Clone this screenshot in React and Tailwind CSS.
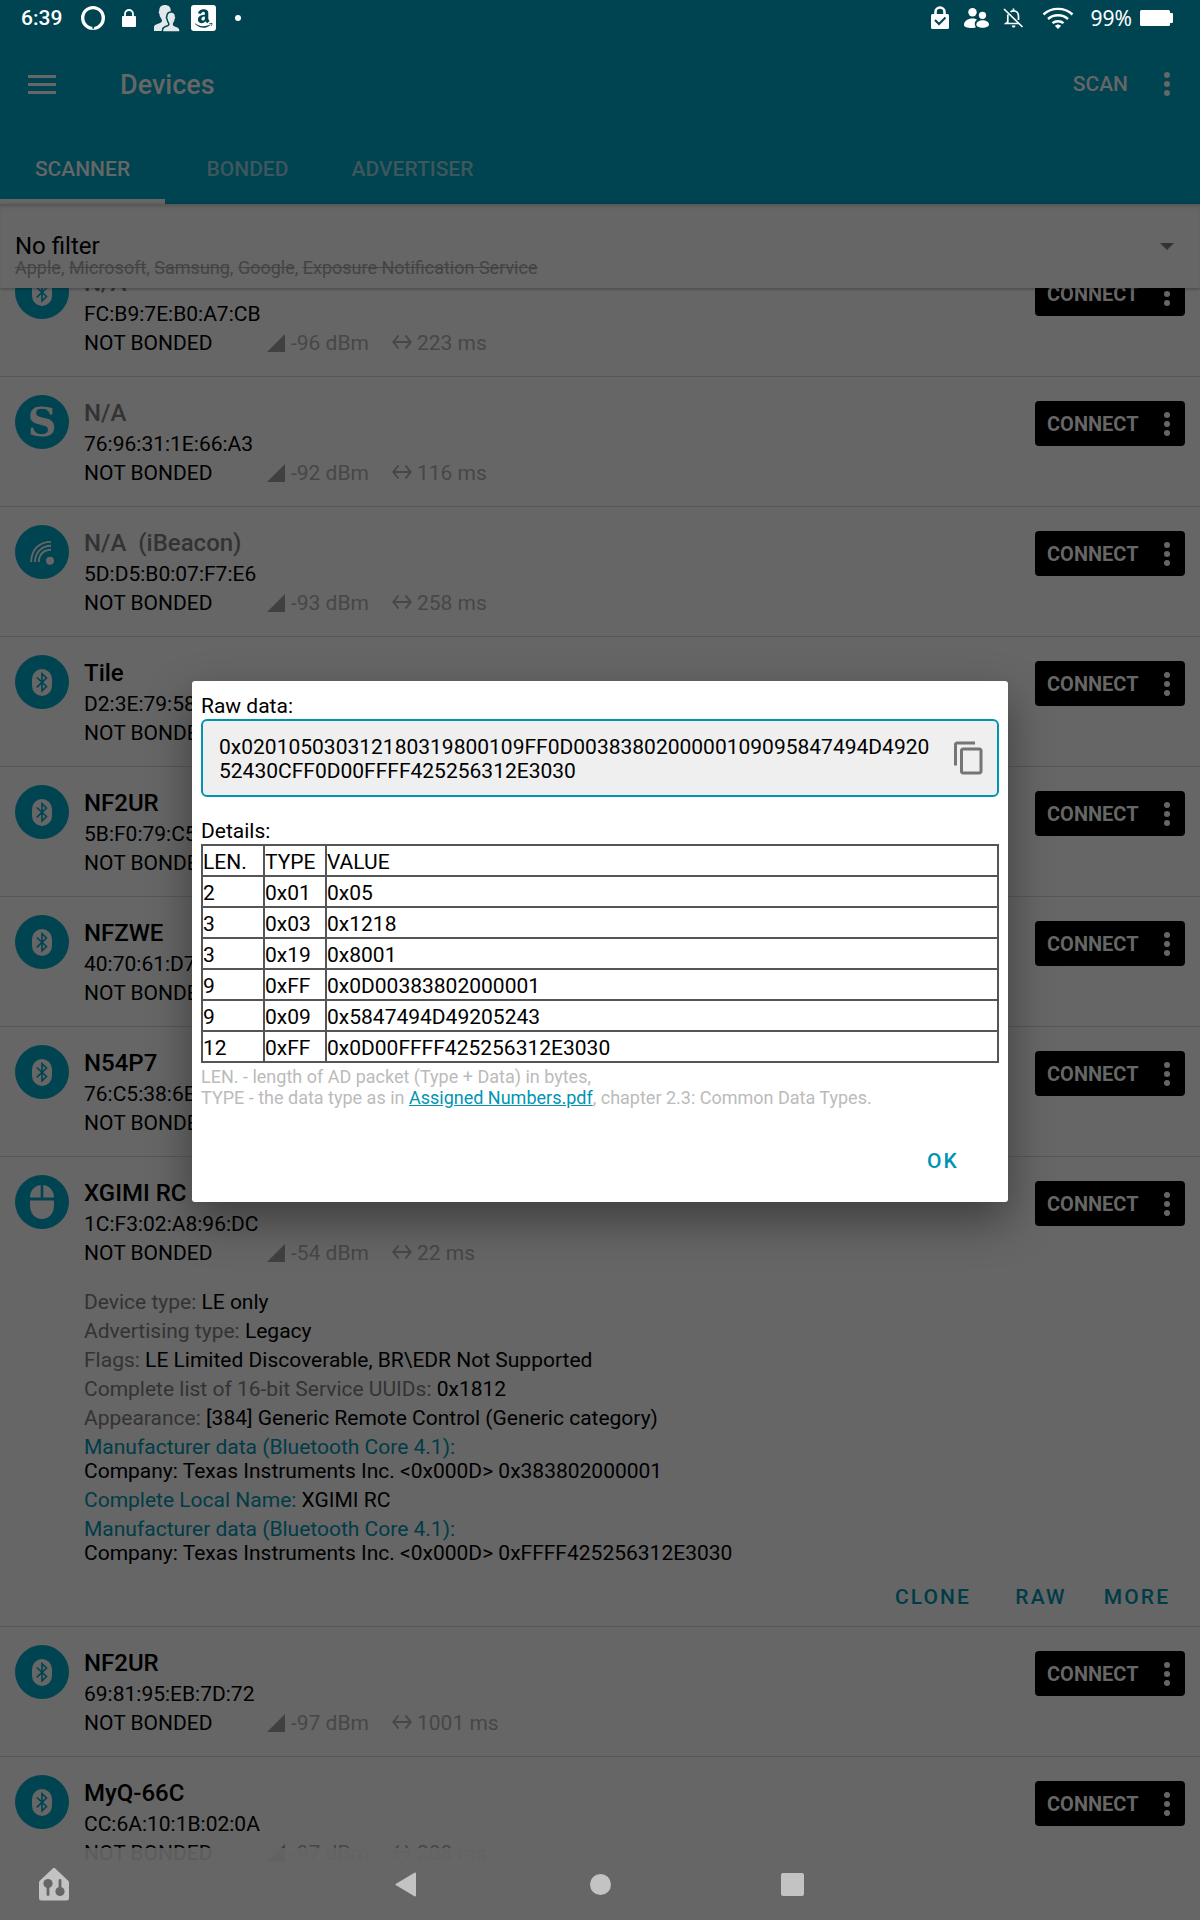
import React from "react";
import { FaAmazon } from "react-icons/fa";
import { MdContentCopy } from "react-icons/md";

const DEVICES = [
  { name: "N/A", muted: true, icon: "bluetooth", mac: "FC:B9:7E:B0:A7:CB", rssi: "-96 dBm", interval: "223 ms" },
  { name: "N/A", muted: true, icon: "s", mac: "76:96:31:1E:66:A3", rssi: "-92 dBm", interval: "116 ms" },
  { name: "N/A\u00a0 (iBeacon)", muted: true, icon: "beacon", mac: "5D:D5:B0:07:F7:E6", rssi: "-93 dBm", interval: "258 ms" },
  { name: "Tile", icon: "bluetooth", mac: "D2:3E:79:58" },
  { name: "NF2UR", icon: "bluetooth", mac: "5B:F0:79:C5" },
  { name: "NFZWE", icon: "bluetooth", mac: "40:70:61:D7" },
  { name: "N54P7", icon: "bluetooth", mac: "76:C5:38:6E" },
  {
    name: "XGIMI RC",
    icon: "mouse",
    mac: "1C:F3:02:A8:96:DC",
    rssi: "-54 dBm",
    interval: "22 ms",
    details: [
      { label: "Device type:", value: "LE only" },
      { label: "Advertising type:", value: "Legacy" },
      { label: "Flags:", value: "LE Limited Discoverable, BR\\EDR Not Supported" },
      { label: "Complete list of 16-bit Service UUIDs:", value: "0x1812" },
      { label: "Appearance:", value: "[384] Generic Remote Control (Generic category)" },
      { label: "Manufacturer data (Bluetooth Core 4.1):", value: "Company: Texas Instruments Inc. <0x000D> 0x383802000001", accent: true, block: true },
      { label: "Complete Local Name:", value: "XGIMI RC", accent: true },
      { label: "Manufacturer data (Bluetooth Core 4.1):", value: "Company: Texas Instruments Inc. <0x000D> 0xFFFF425256312E3030", accent: true, block: true },
    ],
  },
  { name: "NF2UR", icon: "bluetooth", mac: "69:81:95:EB:7D:72", rssi: "-97 dBm", interval: "1001 ms" },
  { name: "MyQ-66C", icon: "bluetooth", mac: "CC:6A:10:1B:02:0A", rssi: "-97 dBm", interval: "208 ms" },
];

const RAW_DATA = "0x0201050303121803198001" + "09FF0D00383802000001" + "09095847494D49205243" + "0CFF0D00FFFF425256312E3030";

const PACKETS = [
  ["2", "0x01", "0x05"],
  ["3", "0x03", "0x1218"],
  ["3", "0x19", "0x8001"],
  ["9", "0xFF", "0x0D00383802000001"],
  ["9", "0x09", "0x5847494D49205243"],
  ["12", "0xFF", "0x0D00FFFF425256312E3030"],
];

const EXCLUDED = ["Apple", "Microsoft", "Samsung", "Google", "Exposure Notification Service"];

function Dots() {
  return (
    <svg width="6" height="24" viewBox="0 0 6 24" fill="currentColor" aria-hidden="true">
      <circle cx="3" cy="3" r="3" />
      <circle cx="3" cy="12" r="3" />
      <circle cx="3" cy="21" r="3" />
    </svg>
  );
}

function StatusBar() {
  return (
    <div className="flex h-9 items-center justify-between pl-[21px] pr-[27px] text-white">
      <div className="flex items-center">
        <span className="w-[60px] text-[21px] font-medium leading-6">6:39</span>
        <svg width="24" height="24" viewBox="0 0 24 24" aria-hidden="true">
          <path fillRule="evenodd" fill="currentColor" d="M12 0a12 12 0 1 1 0 24 12 12 0 0 1 0-24ZM12 3.2C6.8 3.2 3.4 7 3.4 11.9C3.4 16.4 6.7 20 11.2 20.8L12 24L13.5 20.7C17.6 20 20.6 16.3 20.6 11.9C20.6 7 17.2 3.2 12 3.2Z" />
        </svg>
        <svg className="ml-4" width="16" height="20" viewBox="0 0 16 20" aria-hidden="true">
          <path d="M4 9V6a4 4 0 0 1 8 0v3" fill="none" stroke="currentColor" strokeWidth="1.8" />
          <rect x="1" y="8" width="14" height="11" rx="1" fill="currentColor" />
        </svg>
        <svg className="ml-4" width="28" height="28" viewBox="0 0 28 28" aria-hidden="true">
          <path d="M1 27v-4c0-2 3-3 6-4 2-.8 2.5-2 1.5-4C7 13 6.500 11.500 6.500 10 5.500 9 5.500 7.500 6.300 7 6 3 8.500 1 12 1s6 2 5.700 6c.8.5.8 2-.2 3 0 1.500-.5 3-2 5v12Z" fill="#e0e8ea" />
          <path d="M9.500 27v-2c0-2.500 2.500-3.500 5-4.200 1.500-.6 1.700-1.800.9-3-1-1.300-1.300-2.500-1.300-3.800-.9-.7-.8-2-.2-2.500-.2-3 1.800-4.500 4.300-4.500s4.500 1.500 4.300 4.500c.6.5.7 1.800-.2 2.500 0 1.300-.3 2.500-1.300 3.800-.8 1.200-.6 2.400.9 3 2.500.7 5.100 1.700 5.100 4.200v2Z" transform="translate(0 1)" fill="#e0e8ea" stroke="#004451" strokeWidth="1.5" />
        </svg>
        <span className="ml-[10px] flex h-[26px] w-[25px] items-center justify-center rounded-[3px] bg-white text-[#004451]">
          <FaAmazon size={21} aria-hidden="true" />
        </span>
        <span className="ml-[19px] size-[6px] rounded-full bg-white" />
      </div>
      <div className="flex items-center">
        <svg width="18" height="24" viewBox="0 0 18 24" aria-hidden="true">
          <path d="M4.500 9V6a4.500 4.500 0 0 1 9 0v3" fill="none" stroke="currentColor" strokeWidth="2.6" />
          <rect y="8" width="18" height="15" rx="1.5" fill="currentColor" />
          <path d="m4 14 4 4 6.500-6.500" fill="none" stroke="#004451" strokeWidth="2" />
        </svg>
        <svg className="ml-[15px]" width="25" height="20" viewBox="0 0 25 20" fill="currentColor" aria-hidden="true">
          <circle cx="8.5" cy="4.3" r="4.2" />
          <circle cx="18.5" cy="7.3" r="3.6" />
          <path d="M0 17c0-4 4-6.500 8.500-6.500 2 0 3.500.4 4.500 1.200-2.500 1.600-3 4.800-1 7.500-1 .5-2.500.8-3.700.8C3 20 0 19 0 17Z" />
          <path d="M12.300 16.500c0-2.500 3-4.300 6.300-4.300s6.400 1.800 6.400 4.300c0 2-3 3.200-6.400 3.200s-6.300-1.200-6.300-3.200Z" />
        </svg>
        <svg className="ml-[14px]" width="21" height="20" viewBox="0 0 21 20" fill="none" stroke="currentColor" strokeWidth="1.7" aria-hidden="true">
          <path d="M4.800 6.500V14L3 15.500h12.500M7.500 4c1-1 2-1.200 3-1.200 3 0 5 2.200 5 5.200v4M10.500.5v2.300M1 1l18.500 18" />
          <path d="M8.800 17.500h3.600c0 1.400-.8 2-1.800 2s-1.800-.6-1.800-2Z" fill="currentColor" stroke="none" />
        </svg>
        <svg className="ml-[18px]" width="32" height="22" viewBox="0 0 32 22" fill="none" stroke="currentColor" strokeWidth="2.4" aria-hidden="true">
          <path d="M1.500 7.500c8-7.500 21-7.500 29 0M6 12c5.500-5 14.500-5 20 0M10.500 16.200c3-2.700 8-2.700 11 0" />
          <path d="M13 19c1.500-2 4.500-2 6 0l-3 3Z" fill="currentColor" stroke="none" />
        </svg>
        <span className="ml-[17px] font-['Noto_Sans'] text-[21px] leading-6">99%</span>
        <svg className="ml-2" width="33" height="16" viewBox="0 0 33 16" fill="currentColor" aria-hidden="true">
          <rect width="30" height="16" rx="1.5" />
          <rect x="29" y="3" width="4" height="10" rx="1" />
        </svg>
      </div>
    </div>
  );
}

function Tab({ children, active }) {
  return (
    <button
      role="tab"
      aria-selected={!!active}
      className={
        "h-[72px] w-[165px] border-b-[5px] pt-2 text-[21px] font-medium " +
        (active ? "border-[#666] text-[#666]" : "border-transparent text-[#3d575c]")
      }
    >
      {children}
    </button>
  );
}

function Header() {
  return (
    <header className="shrink-0 bg-[#004451] text-[#666]">
      <StatusBar />
      <div className="flex h-24 items-center pl-7 pr-[30px]">
        <button aria-label="Open menu" className="w-[92px]">
          <svg width="28" height="19" viewBox="0 0 28 19" fill="currentColor" aria-hidden="true">
            <path d="M0 0h28v3H0zM0 8h28v3H0zM0 16h28v3H0z" />
          </svg>
        </button>
        <h1 className="flex-1 pt-[2px] text-[27px] font-medium">Devices</h1>
        <button className="pt-[2px] text-[21px] font-medium">SCAN</button>
        <button aria-label="More options" className="ml-9">
          <Dots />
        </button>
      </div>
      <div role="tablist" className="flex">
        <Tab active>SCANNER</Tab>
        <Tab>BONDED</Tab>
        <Tab>ADVERTISER</Tab>
      </div>
    </header>
  );
}

function FilterBar() {
  return (
    <div className="relative z-10 h-[84px] shrink-0 bg-[#666] px-[15px] pt-[29px] shadow-[0_1px_3px_rgba(0,0,0,0.3),inset_0_4px_5px_-3px_rgba(0,0,0,0.25)]">
      <div className="flex items-center">
        <select aria-label="Filter" className="flex-1 appearance-none bg-transparent text-[24px] leading-[27px] text-black">
          <option>No filter</option>
        </select>
        <svg className="mr-[11px]" width="14" height="7" viewBox="0 0 14 7" aria-hidden="true">
          <path d="M0 0h14L7 7Z" fill="#333" />
        </svg>
      </div>
      <p className="text-[18px] leading-4 text-[#444]">
        {EXCLUDED.map((item, i) => (
          <React.Fragment key={item}>
            {i > 0 && ", "}
            <s>{item}</s>
          </React.Fragment>
        ))}
      </p>
    </div>
  );
}

function DeviceIcon({ kind }) {
  return (
    <div className="flex size-[54px] shrink-0 items-center justify-center rounded-full bg-[#004451] text-[#666]">
      {kind === "bluetooth" && (
        <svg width="20" height="27" viewBox="0 0 20 27" aria-hidden="true">
          <rect width="20" height="27" rx="10" fill="currentColor" />
          <path d="m4.800 8.500 9.700 9-4.500 4.300V4.700l4.500 4.300-9.700 9.300" fill="none" stroke="#004451" strokeWidth="1.6" />
        </svg>
      )}
      {kind === "s" && <span className="font-['DejaVu_Serif'] text-[40px] font-bold leading-none">S</span>}
      {kind === "beacon" && (
        <svg width="54" height="54" viewBox="0 0 54 54" fill="none" stroke="currentColor" strokeWidth="1.9" aria-hidden="true">
          <path d="M16.200 37C16.200 25 24 16.900 36 16.900M20 37c0-9.500 6.500-16.200 16-16.200M23.900 37c0-7.500 4.600-12.300 12.100-12.300" />
          <circle cx="35" cy="35.700" r="4" fill="currentColor" stroke="none" />
        </svg>
      )}
      {kind === "mouse" && (
        <svg width="24" height="34" viewBox="0 0 24 34" fill="currentColor" aria-hidden="true">
          <path d="M0 12.500C0 5.500 4.500.8 10.700 0v12.500ZM13.300 0C19.500.8 24 5.500 24 12.500H13.300ZM0 15.500h24V20c0 8.500-5 14-12 14S0 28.500 0 20Z" />
        </svg>
      )}
    </div>
  );
}

function Metrics({ rssi, interval }) {
  return (
    <span className="flex text-[#474747]">
      <span className="flex w-[125px] items-center gap-[6px]">
        <svg className="mb-[2px]" width="18" height="18" viewBox="0 0 18 18" aria-hidden="true">
          <path d="M18 0v18H0Z" fill="#404040" />
        </svg>
        {rssi}
      </span>
      <span className="flex items-center gap-[5px]">
        <svg className="mb-1" width="20" height="14" viewBox="0 0 20 14" fill="none" stroke="currentColor" strokeWidth="1.9" aria-hidden="true">
          <path d="M6.500.5 1.300 7l5.200 6.500M13.500.5 18.700 7l-5.200 6.500M1.300 7h17.400" />
        </svg>
        {interval}
      </span>
    </span>
  );
}

function DeviceRow({ device }) {
  const { name, muted, icon, mac, rssi, interval, details } = device;
  return (
    <li className="border-b border-[#575757] px-[15px] pt-[18px]">
      <div className="flex items-start">
        <DeviceIcon kind={icon} />
        <div className="ml-[15px] min-w-0 flex-1 pt-[3px] text-[21px] leading-[29px] text-black">
          <h2 className={"mb-[2px] text-[24px] font-medium leading-[30px] " + (muted ? "text-[#333]" : "text-black")}>{name}</h2>
          <p>{mac}</p>
          <div className="flex">
            <span className="w-[183px]">NOT BONDED</span>
            {rssi && <Metrics rssi={rssi} interval={interval} />}
          </div>
        </div>
        <div className="mt-[6px] flex h-[45px] w-[150px] items-center justify-between rounded-[4px] bg-black pl-3 pr-[15px] text-[#666]">
          <button className="text-[20px] font-bold">CONNECT</button>
          <button aria-label={"More actions for " + name}>
            <Dots />
          </button>
        </div>
      </div>
      {details ? (
        <>
          <dl className="mt-[22px] flex flex-col gap-[5px] pl-[69px] text-[21px] leading-6">
            {details.map((d, i) => (
              <div key={i}>
                <dt className={(d.block ? "" : "inline ") + (d.accent ? "text-[#003c48]" : "text-[#333]")}>{d.label}</dt>{" "}
                <dd className={(d.block ? "" : "inline ") + "text-black"}>{d.value}</dd>
              </div>
            ))}
          </dl>
          <div className="mb-1 mt-[9px] flex h-12 justify-end text-[21px] font-medium text-[#003c48]">
            <button className="mr-3 min-w-24 tracking-widest">CLONE</button>
            <button className="min-w-24 tracking-widest">RAW</button>
            <button className="min-w-24 tracking-widest">MORE</button>
          </div>
        </>
      ) : (
        <div className="h-[18px]" />
      )}
    </li>
  );
}

function RawDialog() {
  return (
    <div className="absolute inset-x-0 bottom-[73px] top-9 z-20 flex items-center justify-center">
      <div
        role="dialog"
        aria-label="Raw data"
        className="w-[68%] rounded-[3px] bg-white px-[9px] pb-[13px] pt-[13px] text-[21px] text-black shadow-[0_18px_45px_rgba(0,0,0,0.4)]"
      >
        <h2 className="leading-[25px]">Raw data:</h2>
        <div className="flex items-center gap-3 rounded-[6px] border-2 border-[#0094b4] bg-[#efefef] pb-3 pl-4 pr-[10px] pt-3">
          <p className="min-w-0 flex-1 break-all pt-[2px] leading-6">{RAW_DATA}</p>
          <button aria-label="Copy raw data" className="text-[#757575]">
            <MdContentCopy size={36} />
          </button>
        </div>
        <h2 className="mt-[22px] leading-[25px]">Details:</h2>
        <table className="w-full table-fixed border-collapse border-2 border-[#555] text-left leading-[25px]">
          <colgroup>
            <col className="w-[62px]" />
            <col className="w-[62px]" />
            <col />
          </colgroup>
          <thead>
            <tr>
              <th className="border-2 border-[#555] p-0 pt-1 font-normal">LEN.</th>
              <th className="border-2 border-[#555] p-0 pt-1 font-normal">TYPE</th>
              <th className="border-2 border-[#555] p-0 pt-1 font-normal">VALUE</th>
            </tr>
          </thead>
          <tbody>
            {PACKETS.map((row, i) => (
              <tr key={i}>
                {row.map((cell, j) => (
                  <td key={j} className="border-2 border-[#555] p-0 pt-1">
                    {cell}
                  </td>
                ))}
              </tr>
            ))}
          </tbody>
        </table>
        <p className="mt-[3px] text-[18px] leading-[21px] text-[#bbb]">
          LEN. - length of AD packet (Type + Data) in bytes,
          <br />
          TYPE - the data type as in{" "}
          <a href="#assigned-numbers" className="text-[#0094b4] underline">
            Assigned Numbers.pdf
          </a>
          , chapter 2.3: Common Data Types.
        </p>
        <div className="mt-[27px] flex justify-end pr-2">
          <button className="h-[54px] min-w-24 font-medium tracking-widest text-[#0094b4]">OK</button>
        </div>
      </div>
    </div>
  );
}

function NavBar() {
  return (
    <nav className="absolute inset-x-0 bottom-0 z-10 grid h-[72px] grid-cols-[1fr_auto_1fr] items-center bg-[#666]/90 text-[#c3c3c3]">
      <div className="flex items-center justify-between pl-[39px] pr-[174px]">
        <button aria-label="Device dashboard">
          <svg width="30" height="33" viewBox="0 0 30 33" aria-hidden="true">
            <path d="M13.500.7a2 2 0 0 1 3 0L29 12.500c.7.700 1 1.300 1 2.200V30a2.500 2.500 0 0 1-2.500 2.500h-25A2.500 2.500 0 0 1 0 30V14.700c0-.9.3-1.500 1-2.200Z" fill="currentColor" />
            <g fill="#666">
              <circle cx="9" cy="15.500" r="4.600" />
              <rect x="7.600" y="15" width="2.800" height="13" rx="1.400" />
              <circle cx="21" cy="23.500" r="4.600" />
              <rect x="19.600" y="11" width="2.800" height="13" rx="1.400" />
            </g>
          </svg>
        </button>
        <button aria-label="Back">
          <svg width="21" height="25" viewBox="0 0 21 25" aria-hidden="true">
            <path d="M19.500.7 1 11.700a1 1 0 0 0 0 1.600l18.500 11c.8.400 1.500.1 1.500-.8v-22c0-.9-.7-1.200-1.500-.8Z" fill="currentColor" />
          </svg>
        </button>
      </div>
      <button aria-label="Home" className="size-[21px] rounded-full bg-[#c3c3c3]" />
      <div className="flex pl-[170px]">
        <button aria-label="Recent apps" className="size-[23px] rounded-[2px] bg-[#c3c3c3]" />
      </div>
    </nav>
  );
}

export default function App() {
  return (
    <div className="relative flex h-screen flex-col overflow-hidden bg-[#666] font-['Roboto',sans-serif]">
      <Header />
      <FilterBar />
      <main className="min-h-0 flex-1 overflow-hidden">
        <ul className="-mt-[41px]">
          {DEVICES.map((device, i) => (
            <DeviceRow key={i} device={device} />
          ))}
        </ul>
      </main>
      <NavBar />
      <RawDialog />
    </div>
  );
}
